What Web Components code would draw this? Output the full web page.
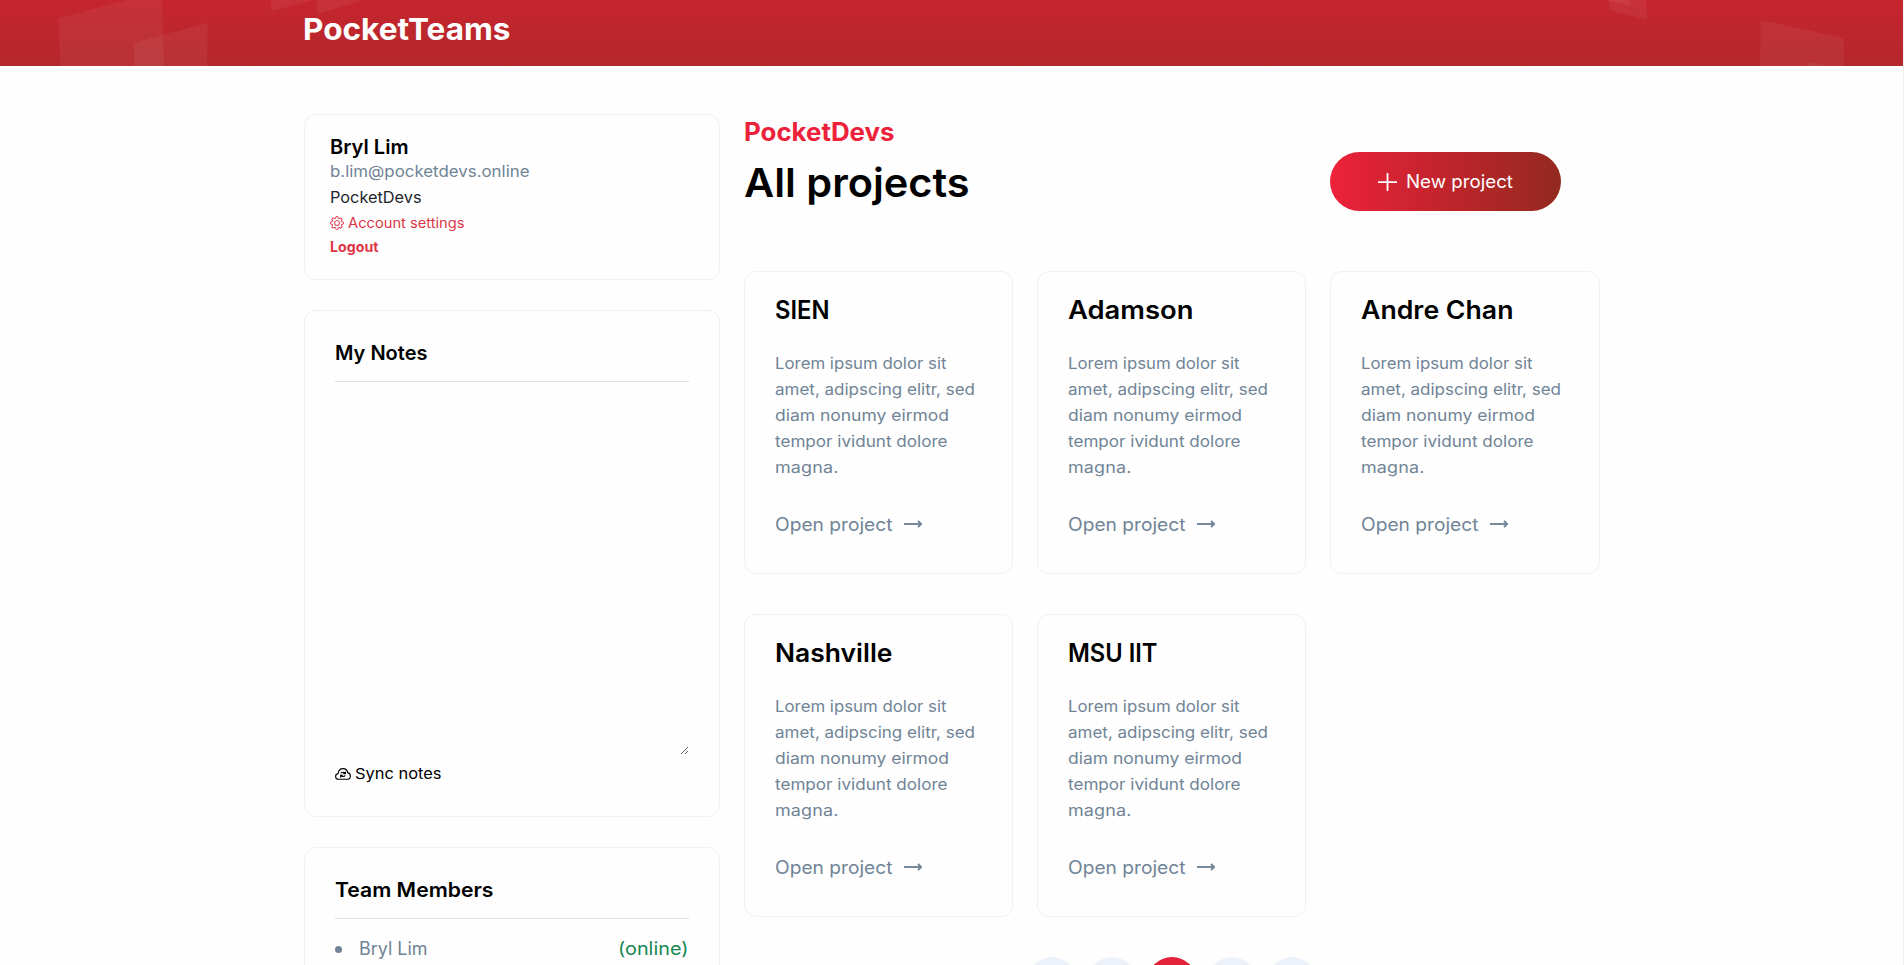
<!DOCTYPE html>
<html lang="en">
<head>
<meta charset="utf-8">
<title>PocketTeams</title>
<style>
html,body{margin:0;height:100%;overflow:hidden;background:#fefefe}
body{font-family:Inter,"Open Sans",sans-serif;color:#000}
</style>
</head>
<body>
<pt-app></pt-app>
<script>
const define = (name, html, setup) => customElements.define(name, class extends HTMLElement {
  constructor(){ super(); this.attachShadow({mode:'open'}); }
  connectedCallback(){ this.shadowRoot.innerHTML = typeof html === 'function' ? html(this) : html; if (setup) setup(this); }
});

/* One line of text, widened (then tracked) so that it runs to the width given in "w". */
define('pt-line', '<style>:host{display:block;white-space:nowrap}span{display:inline-block;transform-origin:0 50%}</style><span><slot></slot></span>', el => {
  const span = el.shadowRoot.querySelector('span');
  const w = parseFloat(el.getAttribute('w')) - 1.5;
  const n = el.textContent.trim().length;
  const fit = () => {
    span.style.letterSpacing = '0px';
    span.style.transform = 'none';
    span.style.marginRight = '0px';
    const now = span.getBoundingClientRect().width;
    if (!now) return;
    const scale = Math.min(w / now, 1.12);
    span.style.letterSpacing = ((w / scale - now) / n) + 'px';
    span.style.transform = `scaleX(${scale})`;
    span.style.marginRight = (w - w / scale) + 'px';
  };
  fit();
  document.fonts.ready.then(fit);
});

define('pt-icon', el => {
  const icons = {
    gear: ['0 0 16 16','<path d="M8 4.754a3.246 3.246 0 1 0 0 6.492 3.246 3.246 0 0 0 0-6.492zM5.754 8a2.246 2.246 0 1 1 4.492 0 2.246 2.246 0 0 1-4.492 0z"/><path d="M9.796 1.343c-.527-1.79-3.065-1.79-3.592 0l-.094.319a.873.873 0 0 1-1.255.52l-.292-.16c-1.64-.892-3.433.902-2.54 2.541l.159.292a.873.873 0 0 1-.52 1.255l-.319.094c-1.79.527-1.79 3.065 0 3.592l.319.094a.873.873 0 0 1 .52 1.255l-.16.292c-.892 1.64.901 3.434 2.541 2.54l.292-.159a.873.873 0 0 1 1.255.52l.094.319c.527 1.79 3.065 1.79 3.592 0l.094-.319a.873.873 0 0 1 1.255-.52l.292.16c1.64.893 3.434-.902 2.54-2.541l-.159-.292a.873.873 0 0 1 .52-1.255l.319-.094c1.79-.527 1.79-3.065 0-3.592l-.319-.094a.873.873 0 0 1-.52-1.255l.16-.292c.893-1.64-.902-3.433-2.541-2.54l-.292.159a.873.873 0 0 1-1.255-.52l-.094-.319zm-2.633.283c.246-.835 1.428-.835 1.674 0l.094.319a1.873 1.873 0 0 0 2.693 1.115l.291-.16c.764-.415 1.6.42 1.184 1.185l-.159.292a1.873 1.873 0 0 0 1.116 2.692l.318.094c.835.246.835 1.428 0 1.674l-.319.094a1.873 1.873 0 0 0-1.115 2.693l.16.291c.415.764-.42 1.6-1.185 1.184l-.291-.159a1.873 1.873 0 0 0-2.693 1.116l-.094.318c-.246.835-1.428.835-1.674 0l-.094-.319a1.873 1.873 0 0 0-2.692-1.115l-.292.16c-.764.415-1.6-.42-1.184-1.185l.159-.291A1.873 1.873 0 0 0 1.945 8.93l-.319-.094c-.835-.246-.835-1.428 0-1.674l.319-.094A1.873 1.873 0 0 0 3.06 4.377l-.16-.292c-.415-.764.42-1.6 1.185-1.184l.292.159a1.873 1.873 0 0 0 2.692-1.115l.094-.319z"/>'],
    cloud: ['0 0 16 12','<g fill="none" stroke="currentColor" stroke-width="1.1"><path d="M3.600 11.300C1.900 11.300.6 10.100.6 8.500c0-1.500 1.100-2.600 2.500-2.850C3.300 2.800 5.300.6 8 .6c2.400 0 4.300 1.700 4.600 4 1.600.3 2.800 1.600 2.800 3.300 0 1.900-1.500 3.400-3.500 3.400z"/><path d="M5.700 5.300c1-1.400 3.300-1.500 4.400-.1M10.400 3.400v2.200H8.200M10.300 7.400c-1 1.400-3.300 1.500-4.400.1M5.600 9.400V7.200h2.200"/></g>'],
    plus: ['0 0 19 18','<path d="M0 8.200h19v1.700H0zM8.600 0h1.800v18H8.600z"/>'],
    arrow: ['0 0 18 8','<g fill="none" stroke="currentColor" stroke-width="1.900"><path d="M0 4h17"/><path d="M14 .8 17.200 4 14 7.200"/></g>']
  };
  const [box, body] = icons[el.getAttribute('name')];
  return `<style>:host{display:block;flex:none}svg{display:block;width:100%;height:100%}</style><svg viewBox="${box}" fill="currentColor">${body}</svg>`;
});

define('pt-header', `<style>
:host{display:grid;height:66px;background:linear-gradient(#c6252e,#b4272b);color:#fff;overflow:hidden}
svg,div{grid-area:1/1}svg{display:block}
div{padding:10px 0 0 303px}
pt-line{font-size:30px;font-weight:650;line-height:38px}
</style>
<svg width="1903" height="66" viewBox="0 0 1903 66" fill="#fff" fill-opacity=".055">
<path d="M58.400 18.300 126.500 0H162l2 66H60.400z"/><path d="M134 42.700 207.700 22.700 207 66H134z"/>
<path d="M271 0v11.300L314 0z"/><path d="M317 0v14L364.500 0z"/>
<path d="M1609 0v10.300l38 9.400L1646 0z"/><path d="M1605 0l25 5.700V0z"/>
<path d="M1760.700 19.700l83 18.600V66H1760z"/><path d="M1808 62l19 4h-19z"/>
</svg>
<div><pt-line w="209">PocketTeams</pt-line></div>`);

define('pt-card', `<style>:host{display:block;box-sizing:border-box;border:1px solid #f0effa;border-radius:12px;background:#fefefe}</style><slot></slot>`);

define('pt-profile', `<style>
:host{display:block}
pt-card{height:166px;padding:20px 25px}
.name{font-size:20px;font-weight:600;line-height:24px}
.mail{color:#708496;line-height:25px}
.org{color:#212529;line-height:26px}
.set{display:flex;align-items:center;gap:4px;color:#dc3545;font-size:14px;line-height:25px}
.set pt-icon{width:14px;height:14px}
.out{color:#dc3545;font-size:14px;font-weight:700;line-height:23px}
</style>
<pt-card><pt-line class="name" w="80">Bryl Lim</pt-line>
<pt-line class="mail" w="201">b.lim@pocketdevs.online</pt-line>
<pt-line class="org" w="93">PocketDevs</pt-line>
<div class="set"><pt-icon name="gear"></pt-icon><pt-line w="118">Account settings</pt-line></div>
<pt-line class="out" w="50">Logout</pt-line></pt-card>`);

const panel = `pt-card{padding:27px 30px 0}
.title{font-size:20px;font-weight:600;line-height:30px;padding-bottom:13px;border-bottom:1px solid #dbdfe1}`;

define('pt-notes', `<style>:host{display:block}${panel}
pt-card{height:507px}
textarea{display:block;box-sizing:border-box;width:100%;height:373px;border:0;padding:0;background:transparent;outline:0}
.sync{display:flex;align-items:center;gap:4px;margin-top:6px;line-height:25px;font-size:15px}
.sync pt-icon{width:16px;height:12px}
</style>
<pt-card><pt-line class="title" w="94">My Notes</pt-line><textarea></textarea>
<div class="sync"><pt-icon name="cloud"></pt-icon><pt-line w="88">Sync notes</pt-line></div></pt-card>`);

define('pt-team', `<style>:host{display:block}${panel}
pt-card{height:200px}
.row{display:flex;align-items:center;margin-top:15px;font-size:18px;line-height:30px;color:#708496}
i{width:7px;height:7px;border-radius:50%;background:#708496;margin-right:17.5px}
.on{margin-left:auto;color:#198754}
</style>
<pt-card><pt-line class="title" w="160">Team Members</pt-line>
<div class="row"><i></i><pt-line w="70">Bryl Lim</pt-line><pt-line class="on" w="72">(online)</pt-line></div></pt-card>`);

define('pt-project', el => `<style>:host{display:block}
pt-card{height:303px;padding:21px 30px 0}
.title{font-size:25px;font-weight:600;line-height:34px}
.text{margin-top:23px;line-height:26px;color:#708496}
.open{display:flex;align-items:center;gap:11.5px;margin-top:31px;font-size:18px;line-height:28px;color:#708496}
.open pt-icon{width:18px;height:8px;margin-top:-2px}
</style>
<pt-card><pt-line class="title" w="${el.getAttribute('w')}">${el.getAttribute('name')}</pt-line>
<div class="text"><pt-line w="173">Lorem ipsum dolor sit</pt-line><pt-line w="201.500">amet, adipscing elitr, sed</pt-line><pt-line w="175.500">diam nonumy eirmod</pt-line><pt-line w="174">tempor ividunt dolore</pt-line><pt-line w="65">magna.</pt-line></div>
<div class="open"><pt-line w="119">Open project</pt-line><pt-icon name="arrow"></pt-icon></div></pt-card>`);

define('pt-button', `<style>
:host{display:flex;box-sizing:border-box;align-items:center;width:231px;height:59px;padding-left:48px;gap:8.500px;border-radius:30px;background:linear-gradient(90deg,#ed213a,#93291e);color:#fff;font-size:18px}
pt-icon{width:19px;height:18px}
</style><pt-icon name="plus"></pt-icon><pt-line w="108.500">New project</pt-line>`);

define('pt-pager', `<style>
:host{display:flex;justify-content:center;gap:10px}
i{width:50px;height:50px;border-radius:50%;background:#edf1f9}
.now{background:linear-gradient(#e9213a,#b5272b)}
</style><i></i><i></i><i class="now"></i><i></i><i></i>`);

define('pt-app', `<style>
:host{display:block;box-sizing:border-box;height:100vh;overflow:hidden;border-right:1px solid #f1f1f1}
main{display:grid;grid-template-columns:416px 856px;column-gap:24px;width:1296px;margin:48px auto 0}
aside{display:flex;flex-direction:column;gap:30px}
.head,.grid{display:grid;grid-template-columns:repeat(3,1fr);column-gap:24px}
.head{height:157px}
.names{grid-column:1/3;padding-top:1px}
.org{font-size:25px;font-weight:700;line-height:34px;color:#ed213a}
.all{font-size:40px;font-weight:600;line-height:48px;margin-top:10px}
pt-button{margin-top:38px}
.grid{row-gap:40px}
pt-pager{margin-top:40px}
</style>
<pt-header></pt-header>
<main>
<aside><pt-profile></pt-profile><pt-notes></pt-notes><pt-team></pt-team></aside>
<section>
<div class="head"><div class="names"><pt-line class="org" w="152">PocketDevs</pt-line><pt-line class="all" w="227">All projects</pt-line></div><pt-button></pt-button></div>
<div class="grid">
<pt-project name="SIEN" w="56"></pt-project><pt-project name="Adamson" w="127"></pt-project><pt-project name="Andre Chan" w="154"></pt-project>
<pt-project name="Nashville" w="119"></pt-project><pt-project name="MSU IIT" w="91"></pt-project>
</div>
<pt-pager></pt-pager>
</section>
</main>`);
</script>
</body>
</html>
